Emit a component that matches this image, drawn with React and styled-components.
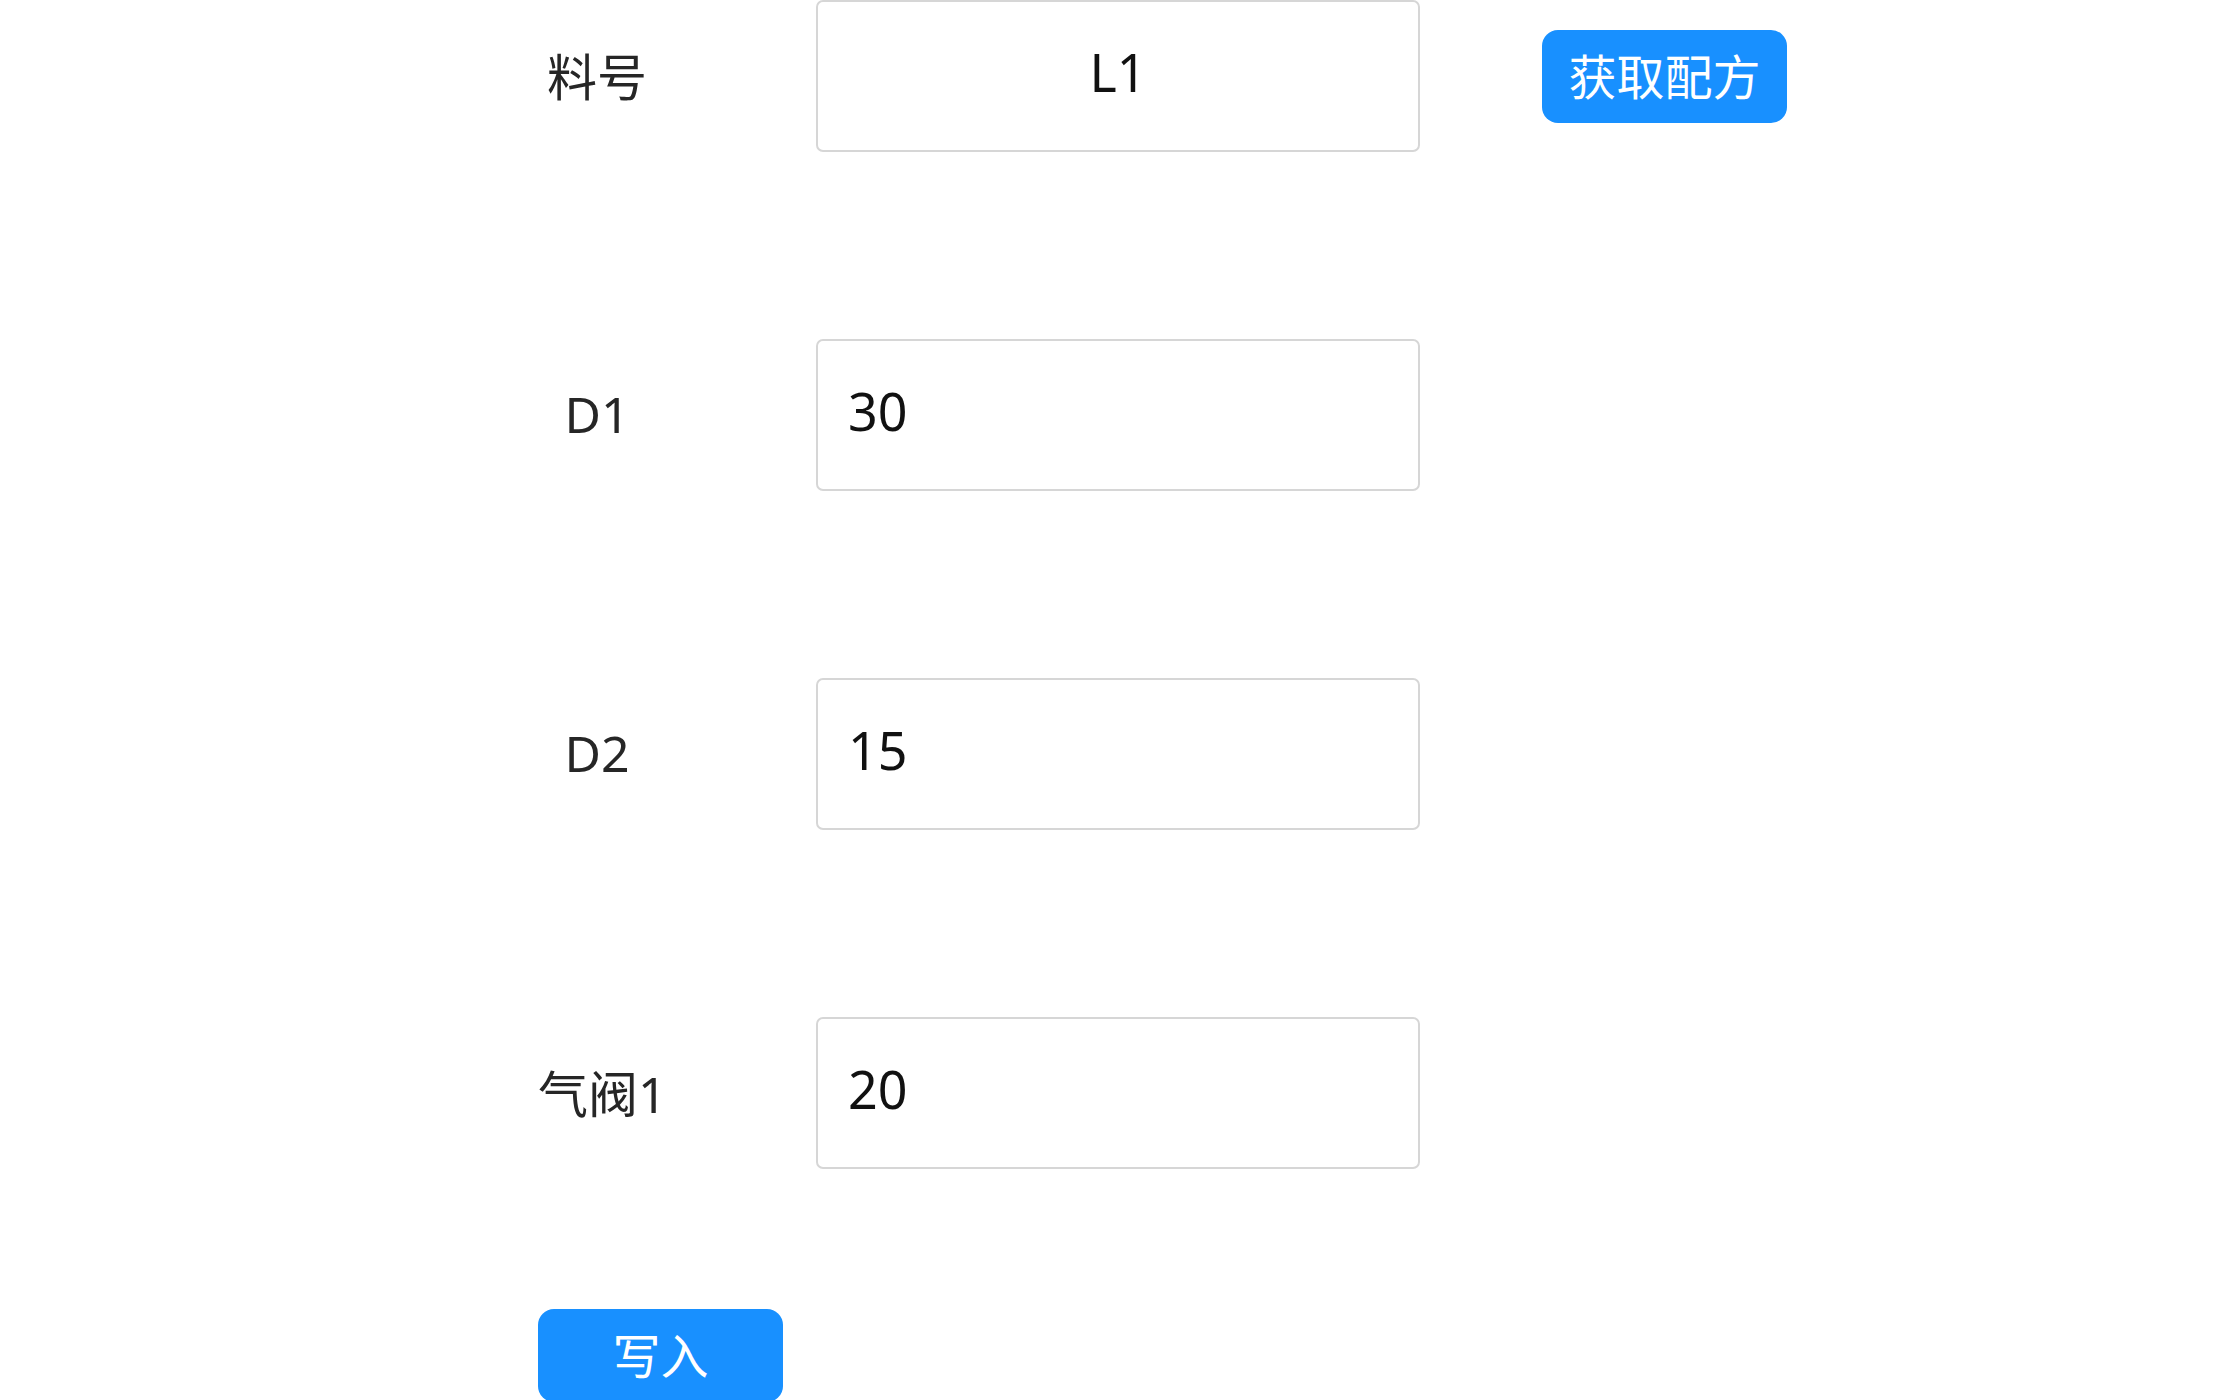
import React, { useState } from "react";
import styled, { createGlobalStyle } from "styled-components";

const GlobalStyle = createGlobalStyle`
  html, body {
    margin: 0;
    padding: 0;
    background: #ffffff;
    font-family: "Noto Sans", "Noto Sans CJK SC", sans-serif;
  }
`;

const Page = styled.div`
  width: 2240px;
  height: 1400px;
  overflow: hidden;
  padding-left: 538px;
  box-sizing: border-box;
`;

const Fields = styled.div`
  display: flex;
  flex-direction: column;
  gap: 187px;
`;

const Row = styled.div`
  display: flex;
  align-items: center;
`;

const Label = styled.div`
  width: 118px;
  text-align: center;
  font-size: 50px;
  color: #262626;
  white-space: nowrap;
  padding-bottom: 3px;
`;

const Field = styled.input`
  width: 604px;
  height: 152px;
  margin-left: 160px;
  box-sizing: border-box;
  border: 2px solid #d6d6d6;
  border-radius: 7px;
  padding: 0 30px 9px;
  font-family: "Noto Sans", "Noto Sans CJK SC", sans-serif;
  font-size: 52px;
  color: #111111;
  text-align: ${(p) => (p.$center ? "center" : "left")};
  outline: none;
  background: #ffffff;
`;

const Button = styled.button`
  width: 245px;
  height: 93px;
  margin-left: ${(p) => p.$offset || 0}px;
  border: none;
  border-radius: 16px;
  background: #1890ff;
  color: #ffffff;
  font-family: "Noto Sans CJK SC", "Noto Sans", sans-serif;
  font-size: 48px;
  cursor: pointer;
  padding: 0 0 5px;
`;

const Actions = styled.div`
  margin-top: 140px;
`;

const App = () => {
  const [values, setValues] = useState({
    code: "L1",
    d1: "30",
    d2: "15",
    valve1: "20",
  });

  const update = (key) => (e) => setValues({ ...values, [key]: e.target.value });

  return (
    <Page>
      <GlobalStyle />
      <Fields>
        <Row>
          <Label>料号</Label>
          <Field $center value={values.code} onChange={update("code")} />
          <Button $offset={122}>获取配方</Button>
        </Row>
        <Row>
          <Label>D1</Label>
          <Field value={values.d1} onChange={update("d1")} />
        </Row>
        <Row>
          <Label>D2</Label>
          <Field value={values.d2} onChange={update("d2")} />
        </Row>
        <Row>
          <Label>气阀1</Label>
          <Field value={values.valve1} onChange={update("valve1")} />
        </Row>
      </Fields>
      <Actions>
        <Button>写入</Button>
      </Actions>
    </Page>
  );
};

export default App;
